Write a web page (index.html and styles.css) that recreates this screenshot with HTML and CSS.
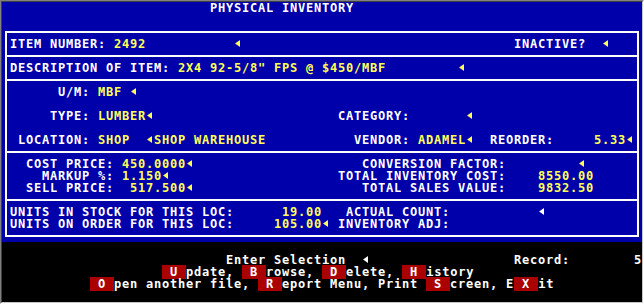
FILE: index.html
```html
<!DOCTYPE html>
<html>
<head>
<meta charset="utf-8">
<title>Physical Inventory</title>
<link rel="stylesheet" href="styles.css">
</head>
<body>
<div class="frame">
  <div class="screen">
    <div class="top">
      <div class="row w">                          PHYSICAL INVENTORY</div>
      <div class="row"></div>
      <div class="box">
        <div class="row">ITEM NUMBER: <span class="y">2492</span>           <span class="ar"></span>                                  INACTIVE?  <span class="ar"></span></div>
        <div class="sep"></div>
        <div class="row">DESCRIPTION OF ITEM: <span class="y">2X4 92-5/8" FPS @ $450/MBF</span>         <span class="ar"></span></div>
        <div class="sep"></div>
        <div class="row">      U/M: <span class="y">MBF</span> <span class="ar"></span></div>
        <div class="row"></div>
        <div class="row">     TYPE: <span class="y">LUMBER</span><span class="ar"></span>                       CATEGORY:       <span class="ar"></span></div>
        <div class="row"></div>
        <div class="row"> LOCATION: <span class="y">SHOP</span>  <span class="ar"></span><span class="y">SHOP WAREHOUSE</span>           VENDOR: <span class="y">ADAMEL</span><span class="ar"></span>  REORDER:     <span class="y">5.33</span><span class="ar"></span></div>
        <div class="sep"></div>
        <div class="row">  COST PRICE: <span class="y">450.0000</span><span class="ar"></span>                     CONVERSION FACTOR:         <span class="ar"></span></div>
        <div class="row">    MARKUP %: <span class="y">1.150</span><span class="ar"></span>                     TOTAL INVENTORY COST:    <span class="y">8550.00</span></div>
        <div class="row">  SELL PRICE:  <span class="y">517.500</span><span class="ar"></span>                     TOTAL SALES VALUE:    <span class="y">9832.50</span></div>
        <div class="sep"></div>
        <div class="row">UNITS IN STOCK FOR THIS LOC:      <span class="y">19.00</span>   ACTUAL COUNT:           <span class="ar wa"></span></div>
        <div class="row">UNITS ON ORDER FOR THIS LOC:     <span class="y">105.00</span><span class="ar"></span> INVENTORY ADJ:</div>
      </div>
    </div>
    <div class="bottom">
      <div class="row"></div>
      <div class="row">                            Enter Selection  <span class="ar wa"></span>                  Record:        5</div>
      <div class="row">                    <span class="k"> U </span>pdate, <span class="k"> B </span>rowse, <span class="k"> D </span>elete, <span class="k"> H </span>istory</div>
      <div class="row">           <span class="k"> O </span>pen another file, <span class="k"> R </span>eport Menu, Print <span class="k"> S </span>creen, E<span class="k"> X </span>it</div>
      <div class="row"></div>
    </div>
  </div>
</div>
</body>
</html>
```
FILE: styles.css
```css
html, body {
  margin: 0;
  padding: 0;
  background: #000;
}

.frame {
  width: 642px;
  height: 302px;
  border-style: solid;
  border-width: 1px;
  border-color: #808080 #ffffff #ffffff #808080;
}

.screen {
  width: 640px;
  height: 300px;
  border-style: solid;
  border-width: 1px;
  border-color: #404040 #c8c8c8 #c8c8c8 #404040;
  font-family: "DejaVu Sans Mono", "Liberation Mono", monospace;
  font-weight: bold;
  font-size: 12px;
  letter-spacing: 0.776px;
  line-height: 12px;
  color: #ffffff;
}

.top {
  background: #0000aa;
  height: 240px;
  overflow: hidden;
}

.bottom {
  background: #000000;
  height: 60px;
  overflow: hidden;
}

.row {
  height: 12px;
  white-space: pre;
  color: #ffffff;
}

.w {
  color: #ffffff;
}

.y {
  color: #ffff55;
}

.k {
  background: #aa0000;
  color: #ffffff;
}

.box {
  margin: 5px 3px 0 3px;
  border: 2px solid #ffffff;
  padding: 5px 3px;
}

.sep {
  height: 2px;
  background: #ffffff;
  margin: 5px -3px;
}

.ar {
  display: inline-block;
  vertical-align: top;
  width: 5px;
  height: 7px;
  margin: 2px 2px 0 1px;
  background: #ffff55;
  clip-path: polygon(0 50%, 100% 0, 100% 100%);
}

.ar.wa {
  background: #ffffff;
}
```
